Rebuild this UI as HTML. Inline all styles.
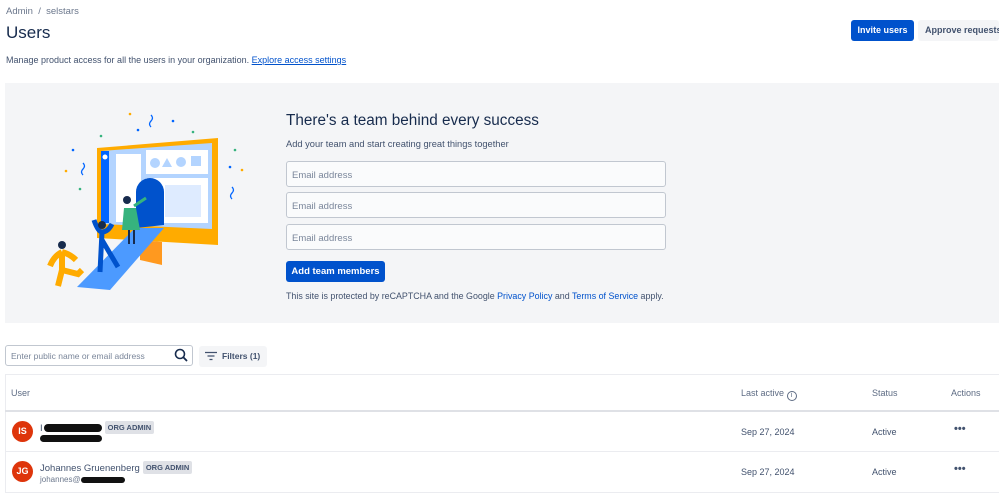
<!DOCTYPE html>
<html><head><meta charset="utf-8"><style>
*{box-sizing:border-box;margin:0;padding:0}
body{width:999px;height:499px;overflow:hidden;background:#fff;font-family:"Liberation Sans",sans-serif;color:#172b4d;position:relative}
.a{position:absolute;white-space:nowrap}
.inp{position:absolute;left:286px;width:380px;height:26px;border:1px solid #c1c7d0;border-radius:3px;background:#fafbfc;font-size:9.5px;color:#7a869a;padding:8px 0 0 5px}
.tag{display:inline-block;background:#dfe1e6;color:#42526e;font-size:7.5px;font-weight:bold;padding:2px 3px;border-radius:2px;margin-left:3px;vertical-align:1px}
.av{position:absolute;left:12px;width:21px;height:21px;border-radius:50%;background:#de350b;color:#fff;font-size:9px;font-weight:bold;text-align:center;line-height:21px}
.t{font-size:9px;color:#42526e}
</style></head><body>
<div class="a" style="left:6px;top:6px;color:#6b778c;font-size:9.5px">Admin &nbsp;/&nbsp; selstars</div>
<div class="a" style="left:6px;top:23px;font-size:17px">Users</div>
<div class="a" style="left:6px;top:55px;color:#42526e;font-size:9px">Manage product access for all the users in your organization. <span style="color:#0052cc;text-decoration:underline">Explore access settings</span></div>
<div class="a" style="left:851px;top:20px;width:63px;height:21px;background:#0052cc;border-radius:3px;color:#fff;font-size:9px;font-weight:bold;text-align:center;line-height:21px">Invite users</div>
<div class="a" style="left:918px;top:20px;width:81px;height:21px;background:#f4f5f7;border-radius:3px;color:#42526e;font-size:9px;font-weight:bold;padding-left:7px;line-height:21px">Approve requests</div>

<div class="a" style="left:5px;top:83px;width:994px;height:240px;background:#f4f5f7"></div>
<svg class="a" style="left:0;top:90px" width="260" height="220" viewBox="0 0 260 220">
<polygon points="97,58 218,48 218,155 97,148" fill="#ffab00"/>
<polygon points="140,150 162,152 162,175 140,170" fill="#ff991f"/>
<polygon points="101,61 212,53 212,139 101,134" fill="#b3d4ff"/>
<rect x="101" y="61" width="8" height="72" fill="#0065ff"/>
<circle cx="105" cy="67" r="2.5" fill="#fff"/>
<rect x="116" y="64" width="25" height="68" fill="#fff"/>
<rect x="146" y="60" width="62" height="24" fill="#fff"/>
<circle cx="155" cy="73" r="5" fill="#b3d4ff"/><polygon points="162,77 167,68 172,77" fill="#b3d4ff"/><circle cx="181" cy="72" r="5" fill="#b3d4ff"/><rect x="191" y="66" width="10" height="10" fill="#b3d4ff"/>
<rect x="146" y="88" width="62" height="45" fill="#fff"/>
<rect x="165" y="95" width="36" height="32" fill="#deebff"/>
<path d="M136,138 V102 a14,14 0 0 1 28,0 V135 Z" fill="#0052cc"/>
<polygon points="135,138 164,138 110,200 77,197" fill="#4c9aff"/>
<path d="M124,118 h12 l4,22 h-18 Z" fill="#36b37e"/>
<path d="M134,116 l12,-8" stroke="#36b37e" stroke-width="3"/>
<path d="M129,140 v14 M134,140 v14" stroke="#172b4d" stroke-width="2"/>
<circle cx="127" cy="110" r="4" fill="#172b4d"/>
<path d="M94,130 q4,12 8,12 q6,0 10,-8 M102,142 l-2,40 M102,150 l16,27" stroke="#0052cc" stroke-width="5" fill="none"/>
<circle cx="102" cy="135" r="4" fill="#172b4d"/>
<path d="M62,162 q-8,4 -12,14 M62,162 q8,2 14,8 M62,162 v18 l-4,16 M62,180 l16,4 l4,-4" stroke="#ffab00" stroke-width="6" fill="none"/>
<circle cx="62" cy="155" r="4" fill="#172b4d"/>
<g fill="#0065ff"><circle cx="73" cy="60" r="1.3"/><circle cx="138" cy="40" r="1.3"/><circle cx="173" cy="31" r="1.3"/><circle cx="230" cy="77" r="1.3"/></g>
<g fill="#36b37e"><circle cx="101" cy="46" r="1.3"/><circle cx="80" cy="99" r="1.3"/><circle cx="193" cy="42" r="1.3"/><circle cx="235" cy="60" r="1.3"/></g>
<g fill="#ffab00"><circle cx="130" cy="24" r="1.3"/><circle cx="66" cy="81" r="1.3"/><circle cx="242" cy="80" r="1.3"/></g>
<path d="M151,25 q3,3 0,6 q-3,3 0,6 M83,73 q3,3 0,6 q-3,3 0,6 M232,97 q3,3 0,6 q-3,3 0,6" stroke="#0065ff" stroke-width="1.3" fill="none"/>
</svg>
<div class="a" style="left:286px;top:112px;font-size:15.3px">There's a team behind every success</div>
<div class="a" style="left:286px;top:139px;font-size:9.3px;color:#42526e">Add your team and start creating great things together</div>
<div class="inp" style="top:161px">Email address</div>
<div class="inp" style="top:192px">Email address</div>
<div class="inp" style="top:224px">Email address</div>
<div class="a" style="left:286px;top:261px;width:99px;height:21px;background:#0052cc;border-radius:3px;color:#fff;font-size:9.5px;font-weight:bold;text-align:center;line-height:21px">Add team members</div>
<div class="a" style="left:286px;top:291px;font-size:8.9px;color:#42526e">This site is protected by reCAPTCHA and the Google <span style="color:#0052cc">Privacy Policy</span> and <span style="color:#0052cc">Terms of Service</span> apply.</div>

<div class="a" style="left:5px;top:345px;width:188px;height:21px;border:1px solid #c1c7d0;border-radius:3px;font-size:8.5px;color:#7a869a;padding:5px 0 0 5px">Enter public name or email address</div>
<svg class="a" style="left:174px;top:348px" width="14" height="14" viewBox="0 0 14 14"><circle cx="6" cy="6" r="4.5" stroke="#172b4d" stroke-width="1.6" fill="none"/><path d="M9.3,9.3 L13,13" stroke="#172b4d" stroke-width="1.8"/></svg>
<div class="a" style="left:199px;top:346px;width:68px;height:21px;background:#f4f5f7;border-radius:3px;font-size:8.5px;color:#42526e;font-weight:bold;line-height:21px;padding-left:23px">Filters (1)</div>
<svg class="a" style="left:205px;top:351px" width="12" height="10"><path d="M0,1.5h12M2.5,5h7M4.5,8.5h3" stroke="#42526e" stroke-width="1.3"/></svg>

<div class="a" style="left:5px;top:374px;width:994px;height:119px;border:1px solid #ebecf0;border-right:none"></div>
<div class="a" style="left:5px;top:410px;width:994px;height:2px;background:#dfe1e6"></div>
<div class="a" style="left:5px;top:451px;width:994px;height:1px;background:#ebecf0"></div>
<div class="a t" style="left:11px;top:388px;color:#5e6c84">User</div>
<div class="a t" style="left:741px;top:388px;color:#5e6c84">Last active <span style="display:inline-block;width:10px;height:10px;border:1px solid #5e6c84;border-radius:50%;font-size:7px;text-align:center;line-height:8px;vertical-align:-1px">i</span></div>
<div class="a t" style="left:872px;top:388px;color:#5e6c84">Status</div>
<div class="a t" style="left:951px;top:388px;color:#5e6c84">Actions</div>

<div class="av" style="top:421px">IS</div>
<div class="a t" style="left:40px;top:421px;font-size:9.5px">I<span style="display:inline-block;width:58px;height:8px;background:#111;border-radius:4px;vertical-align:middle;margin-left:1px"></span><span class="tag">ORG ADMIN</span></div>
<div class="a" style="left:40px;top:435px;width:62px;height:7px;background:#111;border-radius:4px"></div>
<div class="a t" style="left:741px;top:427px">Sep 27, 2024</div>
<div class="a t" style="left:872px;top:427px">Active</div>
<div class="a" style="left:954px;top:423px;font-size:11px;font-weight:bold;color:#42526e">•••</div>

<div class="av" style="top:461px">JG</div>
<div class="a t" style="left:40px;top:461px;font-size:9.5px">Johannes Gruenenberg<span class="tag">ORG ADMIN</span></div>
<div class="a" style="left:40px;top:475px;font-size:8px;color:#6b778c">johannes@<span style="display:inline-block;width:44px;height:6px;background:#111;border-radius:3px;vertical-align:middle"></span></div>
<div class="a t" style="left:741px;top:467px">Sep 27, 2024</div>
<div class="a t" style="left:872px;top:467px">Active</div>
<div class="a" style="left:954px;top:463px;font-size:11px;font-weight:bold;color:#42526e">•••</div>
</body></html>
